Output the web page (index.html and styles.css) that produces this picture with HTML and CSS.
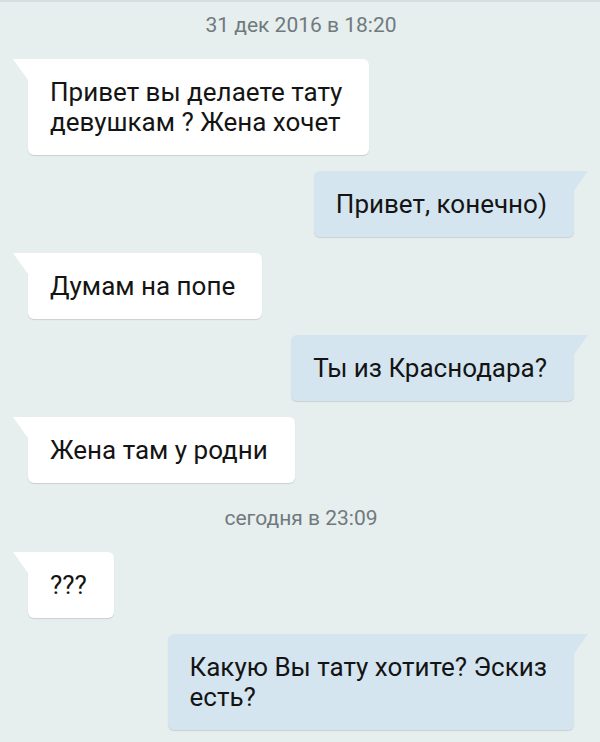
FILE: index.html
```html
<!DOCTYPE html>
<html lang="ru">
<head>
  <meta charset="UTF-8">
  <title>Диалог</title>
  <link rel="stylesheet" href="styles.css">
</head>
<body>

  <div class="chat">
    <div class="stamp">31 дек 2016 в 18:20</div>

    <div class="msg msg-in">Привет вы делаете тату<br>девушкам ? Жена хочет</div>
    <div class="msg msg-out">Привет, конечно)</div>
    <div class="msg msg-in">Думам на попе</div>
    <div class="msg msg-out">Ты из Краснодара?</div>
    <div class="msg msg-in">Жена там у родни</div>

    <div class="stamp">сегодня в 23:09</div>

    <div class="msg msg-in">???</div>
    <div class="msg msg-out">Какую Вы тату хотите? Эскиз<br>есть?</div>
  </div>

</body>
</html>
```

FILE: styles.css
```css
* {
  box-sizing: border-box;
}

body {
  margin: 0;
  font-family: Roboto, 'Noto Sans', sans-serif;
  background: #e7eeee;
  border-top: 2px solid #d7e0e0;
  min-height: 100vh;
  overflow: hidden;
}

.chat {
  display: flex;
  flex-direction: column;
  gap: 16px;
  padding: 4px 26px 0 28px;
}

.stamp {
  text-align: center;
  color: #6f7a7e;
  font-size: 21px;
  line-height: 24px;
  margin: 7px 0 6px;
}

.msg {
  position: relative;
  font-size: 26px;
  line-height: 30px;
  color: #141414;
  padding: 18px 27px 18px 22px;
  border-radius: 6px;
  box-shadow: 0 1px 1px rgba(0,0,0,0.13);
}

.msg::before {
  content: '';
  position: absolute;
  top: 0;
  width: 15px;
  height: 21px;
  background: inherit;
}

.msg-in {
  align-self: flex-start;
  background: #ffffff;
  border-top-left-radius: 0;
}

.msg-in::before {
  left: -15px;
  clip-path: polygon(0 0, 100% 0, 100% 100%);
}

.msg-out {
  align-self: flex-end;
  background: #d4e5f0;
  border-top-right-radius: 0;
}

.msg-out::before {
  right: -14px;
  clip-path: polygon(0 0, 100% 0, 0 100%);
}
```
